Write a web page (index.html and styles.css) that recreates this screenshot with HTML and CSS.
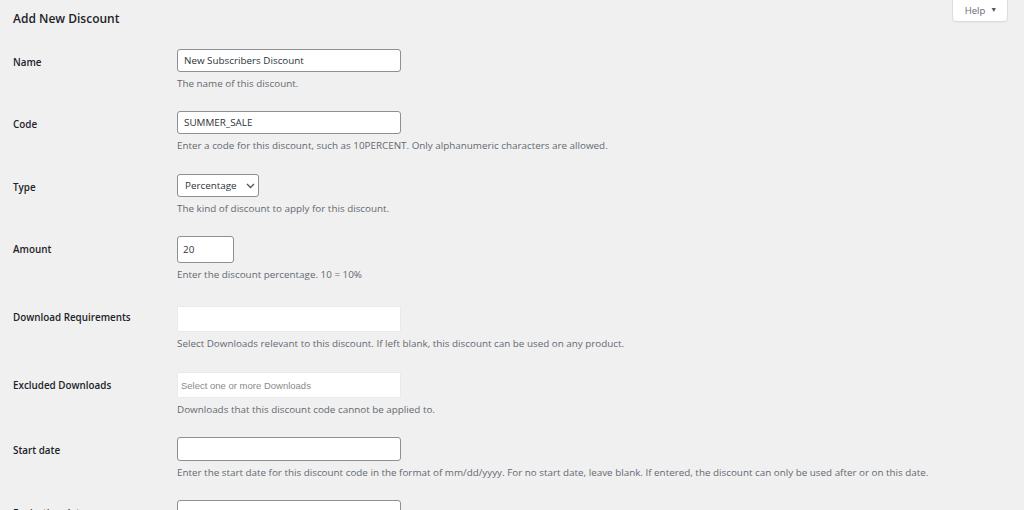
FILE: index.html
```html
<!DOCTYPE html>
<html lang="en">
<head>
<meta charset="utf-8">
<title>Add New Discount</title>
<link rel="stylesheet" href="styles.css">
</head>
<body>
<div class="page">
  <header class="top">
    <h1 class="title">Add New Discount</h1>
    <button class="help" type="button">Help <span class="tri">&#9660;</span></button>
  </header>
  <form class="form">
    <div class="row">
      <label class="label">Name</label>
      <div class="field">
        <div class="input wide">New Subscribers Discount</div>
        <p class="desc">The name of this discount.</p>
      </div>
    </div>
    <div class="row row-22">
      <label class="label">Code</label>
      <div class="field">
        <div class="input wide">SUMMER_SALE</div>
        <p class="desc">Enter a code for this discount, such as 10PERCENT. Only alphanumeric characters are allowed.</p>
      </div>
    </div>
    <div class="row">
      <label class="label">Type</label>
      <div class="field">
        <div class="input select">Percentage
          <svg class="chev" width="9" height="6" viewBox="0 0 9 6"><path d="M1 1l3.5 3.5L8 1" fill="none" stroke="#50575e" stroke-width="1.3"/></svg>
        </div>
        <p class="desc">The kind of discount to apply for this discount.</p>
      </div>
    </div>
    <div class="row row-25">
      <label class="label">Amount</label>
      <div class="field">
        <div class="input small">20</div>
        <p class="desc">Enter the discount percentage. 10 = 10%</p>
      </div>
    </div>
    <div class="row row-22">
      <label class="label label-up">Download Requirements</label>
      <div class="field">
        <div class="chosen"></div>
        <p class="desc">Select Downloads relevant to this discount. If left blank, this discount can be used on any product.</p>
      </div>
    </div>
    <div class="row">
      <label class="label">Excluded Downloads</label>
      <div class="field">
        <div class="chosen"><span class="placeholder">Select one or more Downloads</span></div>
        <p class="desc">Downloads that this discount code cannot be applied to.</p>
      </div>
    </div>
    <div class="row">
      <label class="label">Start date</label>
      <div class="field">
        <div class="input wide date"></div>
        <p class="desc">Enter the start date for this discount code in the format of mm/dd/yyyy. For no start date, leave blank. If entered, the discount can only be used after or on this date.</p>
      </div>
    </div>
    <div class="row">
      <label class="label">Expiration date</label>
      <div class="field">
        <div class="input wide date"></div>
        <p class="desc">Enter the expiration date for this discount code in the format of mm/dd/yyyy. For no expiration, leave blank.</p>
      </div>
    </div>
  </form>
</div>
</body>
</html>
```
FILE: styles.css
```css
html, body {
  margin: 0;
  padding: 0;
  background: #f0f0f1;
  height: 100%;
  overflow: hidden;
}
body {
  font-family: "Open Sans", "Noto Sans", sans-serif;
  color: #1d2327;
}
.page {
  padding: 0 16px 0 13px;
}
.top {
  display: flex;
  justify-content: space-between;
  align-items: flex-start;
}
.title {
  margin: 10px 0 0;
  font-size: 12px;
  line-height: 18px;
  font-weight: 600;
  color: #1d2327;
}
.help {
  margin: -1px 0 0;
  width: 56px;
  height: 23px;
  background: #fff;
  border: 1px solid #dcdcde;
  border-radius: 0 0 4px 4px;
  font-family: inherit;
  font-size: 9.5px;
  color: #646970;
  padding: 0 0 0 2px;
  display: flex;
  align-items: center;
  justify-content: center;
  gap: 5px;
  box-shadow: 0 1px 1px rgba(0,0,0,0.04);
}
.help .tri {
  font-size: 7px;
  color: #50575e;
  position: relative;
  top: -1px;
}
.form {
  margin-top: 21px;
}
.row {
  display: grid;
  grid-template-columns: 164px 1fr;
  align-items: start;
  margin-bottom: 21px;
}
.row-22 { margin-bottom: 22px; }
.row-25 { margin-bottom: 25px; }
.label {
  font-size: 9.85px;
  font-weight: 600;
  line-height: 14px;
  padding-top: 6px;
  color: #1d2327;
}
.label-up { padding-top: 4px; }
.field {
  display: flex;
  flex-direction: column;
  align-items: flex-start;
}
.input {
  box-sizing: border-box;
  height: 23px;
  background: #fff;
  border: 1px solid #8c8f94;
  border-radius: 3px;
  font-size: 9.85px;
  line-height: 21px;
  padding: 0 6px;
  color: #2c3338;
  display: flex;
  align-items: center;
}
.wide { width: 224px; }
.date { height: 24px; }
.small { width: 57px; height: 27px; padding: 0 5px; }
.select {
  width: 82px;
  gap: 9px;
  padding: 0 0 0 7px;
}
.chev { flex: none; }
.chosen {
  box-sizing: border-box;
  width: 224px;
  height: 26px;
  background: #fff;
  border: 1px solid #eaeaea;
  border-radius: 1px;
  display: flex;
  align-items: center;
  padding: 0 3px;
}
.placeholder {
  font-family: "Liberation Sans", Arial, sans-serif;
  font-size: 9.5px;
  color: #8a8a8a;
}
.desc {
  margin: 4px 0 0;
  font-size: 9.85px;
  line-height: 14px;
  color: #646970;
  white-space: nowrap;
}
```
